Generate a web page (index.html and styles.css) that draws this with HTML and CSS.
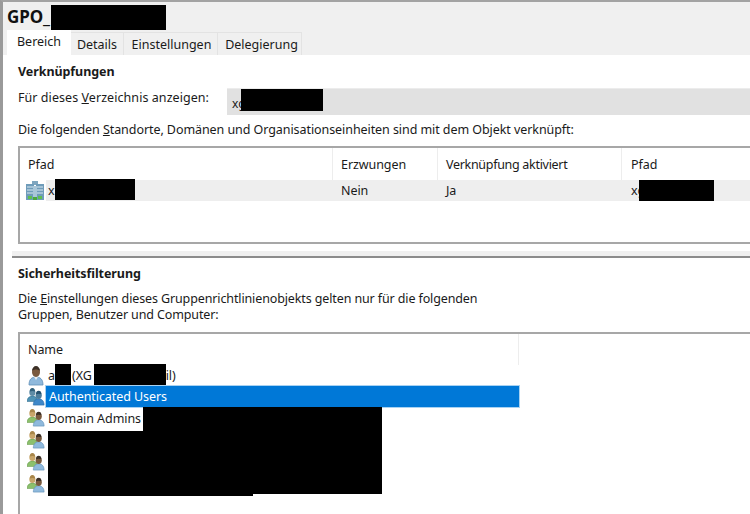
FILE: index.html
```html
<!DOCTYPE html>
<html>
<head>
  <title>GPO</title>
  <link rel="stylesheet" href="styles.css">
</head>
<body>
  <svg class="defs" width="0" height="0">
    <symbol id="site" viewBox="0 0 20 20">
      <rect x="7" y="0" width="6" height="4" fill="#7fa6bf"/>
      <rect x="1" y="3" width="8" height="16" fill="#6f9cba"/>
      <rect x="11" y="3" width="8" height="16" fill="#6f9cba"/>
      <rect x="8" y="5" width="4" height="14" fill="#a9c6d8"/>
      <path d="M2 6h6M2 9h6M2 12h6M12 6h6M12 9h6M12 12h6" stroke="#dbe8f0" stroke-width="1"/>
      <rect x="3" y="15" width="4" height="3" fill="#5fbf4f"/>
      <rect x="13" y="15" width="4" height="3" fill="#5fbf4f"/>
      <rect x="8" y="16" width="4" height="3" fill="#4aa83c"/>
    </symbol>
    <symbol id="user" viewBox="0 0 16 20">
      <path d="M1 19c0-6 3-8 7-8s7 2 7 8z" fill="#8fb9dc" stroke="#5f8fb8" stroke-width=".8"/>
      <path d="M6 11l2 3 2-3z" fill="#e8eef2"/>
      <ellipse cx="8" cy="6" rx="4" ry="5" fill="#7a5a3e"/>
      <path d="M4 5c0-3 2-5 4-5s4 2 4 5c-2-2-6-2-8 0z" fill="#3c3026"/>
    </symbol>
    <symbol id="group" viewBox="0 0 20 20">
      <path d="M0 15c0-4 3-6 6-6s6 2 6 6z" fill="#8cc06c" stroke="#6a9a50" stroke-width=".6"/>
      <ellipse cx="6" cy="5" rx="3.4" ry="4" fill="#c9a66b"/>
      <path d="M3 4c0-2 1-4 3-4s3 2 3 4c-2-1-4-1-6 0z" fill="#a8864a"/>
      <path d="M7 19c0-5 3-7 6-7s6 2 6 7z" fill="#8fb9dc" stroke="#5f8fb8" stroke-width=".7"/>
      <ellipse cx="13" cy="8" rx="3.4" ry="4.2" fill="#7a5a3e"/>
      <path d="M10 7c0-3 1-4 3-4s3 1 3 4c-2-1-4-1-6 0z" fill="#3c3026"/>
    </symbol>
    <symbol id="group-blue" viewBox="0 0 20 20">
      <path d="M0 15c0-4 3-6 6-6s6 2 6 6z" fill="#4f93b5" stroke="#34708f" stroke-width=".6"/>
      <ellipse cx="6" cy="5" rx="3.4" ry="4" fill="#5f8ca6"/>
      <path d="M3 4c0-2 1-4 3-4s3 2 3 4c-2-1-4-1-6 0z" fill="#2f5f7a"/>
      <path d="M7 19c0-5 3-7 6-7s6 2 6 7z" fill="#3f88c8" stroke="#2a6aa5" stroke-width=".7"/>
      <ellipse cx="13" cy="8" rx="3.4" ry="4.2" fill="#4d7d9b"/>
      <path d="M10 7c0-3 1-4 3-4s3 1 3 4c-2-1-4-1-6 0z" fill="#234f6b"/>
    </symbol>
  </svg>

  <div class="window">
    <div class="title-bar">
      <h1 class="title">GPO_</h1>
      <span class="redact redact-title"></span>
    </div>

    <div class="tabs">
      <div class="tab active">Bereich</div>
      <div class="tab tab-details">Details</div>
      <div class="tab tab-settings">Einstellungen</div>
      <div class="tab tab-deleg">Delegierung</div>
    </div>

    <div class="upper">
      <h2 class="heading">Verknüpfungen</h2>
      <div class="show-row">
        <span class="show-label">Für dieses <u>V</u>erzeichnis anzeigen:</span>
        <div class="combo">xg<span class="redact redact-combo"></span></div>
      </div>
      <p class="note">Die folgenden <u>S</u>tandorte, Domänen und Organisationseinheiten sind mit dem Objekt verknüpft:</p>

      <div class="list links-list">
        <div class="list-head links-head">
          <div class="col col-path">Pfad</div>
          <div class="col col-forced">Erzwungen</div>
          <div class="col col-active head-active">Verknüpfung aktiviert</div>
          <div class="col col-path2">Pfad</div>
        </div>
        <div class="link-row">
          <svg class="site-icon"><use href="#site"/></svg>
          <div class="link-cells">
            <div class="cell col-path-cell">x<span class="redact redact-link"></span></div>
            <div class="cell col-forced">Nein</div>
            <div class="cell col-active">Ja</div>
            <div class="cell col-path2">xg<span class="redact redact-path"></span></div>
          </div>
        </div>
      </div>
    </div>

    <div class="splitter"></div>

    <div class="lower">
      <h2 class="heading">Sicherheitsfilterung</h2>
      <p class="note note-filter">Die <u>E</u>instellungen dieses Gruppenrichtlinienobjekts gelten nur für die folgenden<br>Gruppen, Benutzer und Computer:</p>

      <div class="list filter-list">
        <div class="list-head name-head">
          <div class="col col-name">Name</div>
        </div>
        <div class="name-row">
          <svg class="user-icon"><use href="#user"/></svg>
          <span class="name-text">a<span class="redact redact-a"></span></span>
          <span class="name-rest">(XG</span>
          <span class="redact redact-xg"></span>
          <span class="name-end">il)</span>
        </div>
        <div class="name-row">
          <svg class="user-icon"><use href="#group-blue"/></svg>
          <span class="name-text selected">Authenticated Users</span>
        </div>
        <div class="name-row">
          <svg class="user-icon"><use href="#group"/></svg>
          <span class="name-text">Domain Admins</span>
          <span class="redact redact-block"></span>
          <span class="redact redact-tail"></span>
        </div>
        <div class="name-row"><svg class="user-icon"><use href="#group"/></svg></div>
        <div class="name-row"><svg class="user-icon"><use href="#group"/></svg></div>
        <div class="name-row"><svg class="user-icon"><use href="#group"/></svg></div>
      </div>
    </div>
  </div>
</body>
</html>
```

FILE: styles.css
```css
* {
  box-sizing: border-box;
}

html, body {
  margin: 0;
  height: 100%;
  overflow: hidden;
}

body {
  font-family: "Noto Sans", "Open Sans", sans-serif;
  font-size: 12.5px;
  letter-spacing: -0.07px;
  color: #1a1a1a;
  background-color: #fff;
}

.defs {
  position: absolute;
}

.window {
  height: 514px;
  border-top: 2px solid #a3a3a3;
  border-left: 3px solid #9a9a9a;
  overflow: hidden;
}

.redact {
  position: absolute;
  background-color: #000;
}

.title-bar {
  position: relative;
  height: 28px;
  padding-left: 4px;
  background-color: #f0f0f0;
}

.title {
  margin: 0;
  font-size: 17px;
  line-height: 30px;
  font-weight: 700;
  color: #111;
}

.redact-title {
  left: 48px;
  top: 3px;
  width: 115px;
  height: 25px;
}

.tabs {
  display: flex;
  align-items: flex-end;
  height: 25px;
  padding-left: 4px;
  background-color: #f0f0f0;
  letter-spacing: 0;
}

.tab {
  height: 23px;
  line-height: 23px;
  text-align: center;
  background-color: #f0f0f0;
  border: 1px solid #e3e3e3;
  border-bottom: none;
  border-left: none;
}

.tab.active {
  width: 64px;
  height: 25px;
  line-height: 23px;
  background-color: #fff;
  border: none;
}

.tab-details {
  width: 53px;
}

.tab-settings {
  width: 94px;
  padding-left: 2px;
}

.tab-deleg {
  width: 84px;
  padding-left: 4px;
}

.upper {
  height: 196px;
  padding: 8px 0 0 15px;
}

.heading {
  margin: 0;
  font-size: 12.5px;
  line-height: 18px;
  font-weight: 700;
}

.show-row {
  display: flex;
  margin-top: 7px;
}

.show-label {
  width: 209px;
  line-height: 18px;
  padding-top: 1px;
  letter-spacing: 0.06px;
}

.combo {
  position: relative;
  flex: 1;
  height: 27px;
  padding: 5px 0 0 5px;
  line-height: 20px;
  background-color: #e1e1e1;
  border-top: 1px solid #ececec;
  font-size: 12px;
}

.redact-combo {
  left: 14px;
  top: 0;
  width: 82px;
  height: 22px;
}

.note {
  margin: 6px 0 0;
  line-height: 18px;
}

.list {
  background-color: #fff;
  border: 2px solid #a7a7a7;
  border-right: none;
}

.links-list {
  height: 98px;
  margin-top: 7px;
}

.list-head {
  display: flex;
  height: 31px;
}

.links-head {
  height: 32px;
}

.col {
  padding-left: 8px;
  line-height: 33px;
  border-right: 1px solid #ededed;
}

.col-path {
  width: 313px;
}

.col-forced {
  width: 105px;
}

.col-active {
  width: 184px;
}

.head-active {
  letter-spacing: -0.3px;
}

.col-path2 {
  flex: 1;
  padding-left: 9px;
  border-right: none;
}

.link-row {
  display: flex;
  height: 21px;
  align-items: center;
}

.site-icon {
  width: 20px;
  height: 20px;
  margin-left: 5px;
  flex: none;
}

.link-cells {
  display: flex;
  flex: 1;
  height: 21px;
  margin-left: 1px;
  background-color: #eee;
  line-height: 21px;
}

.cell {
  position: relative;
  padding-left: 8px;
  border-right: none;
}

.cell.col-path2 {
  padding-left: 9px;
}

.col-path-cell {
  width: 287px;
  padding-left: 2px;
}

.redact-link {
  left: 9px;
  top: -1px;
  width: 80px;
  height: 21px;
}

.redact-path {
  left: 17px;
  top: 0;
  width: 75px;
  height: 21px;
}

.splitter {
  height: 7px;
  margin-left: 9px;
  background-color: #f0f0f0;
  border-bottom: 2px solid #8c8c8c;
}

.lower {
  padding: 7px 0 0 15px;
}

.note-filter {
  margin-top: 8px;
  line-height: 16px;
  letter-spacing: -0.12px;
}

.filter-list {
  height: 200px;
  margin-top: 9px;
}

.name-head {
  height: 31px;
}

.name-head .col {
  line-height: 32px;
}

.col-name {
  width: 499px;
}

.name-row {
  position: relative;
  display: flex;
  align-items: center;
  height: 21px;
  line-height: 21px;
}

.name-row:nth-child(n+4) {
  height: 22px;
}

.user-icon {
  width: 18px;
  height: 20px;
  margin-left: 7px;
  flex: none;
}

.name-text {
  position: relative;
  margin-left: 1px;
  padding-left: 2px;
  background-color: #fff;
}

.name-text.selected {
  flex: none;
  width: 473px;
  padding-left: 3px;
  color: #fff;
  background-color: #0078d7;
  box-shadow: 0 0 0 1px #a8d2f2;
}

.name-rest {
  margin-left: 17px;
}

.name-end {
  margin-left: 74px;
}

.redact-a {
  left: 9px;
  top: -1px;
  width: 16px;
  height: 22px;
}

.redact-xg {
  left: 74px;
  top: -1px;
  width: 72px;
  height: 22px;
}

.redact-block {
  left: 123px;
  top: 0;
  width: 239px;
  height: 87px;
}

.redact-tail {
  left: 28px;
  top: 24px;
  width: 205px;
  height: 65px;
}
```
